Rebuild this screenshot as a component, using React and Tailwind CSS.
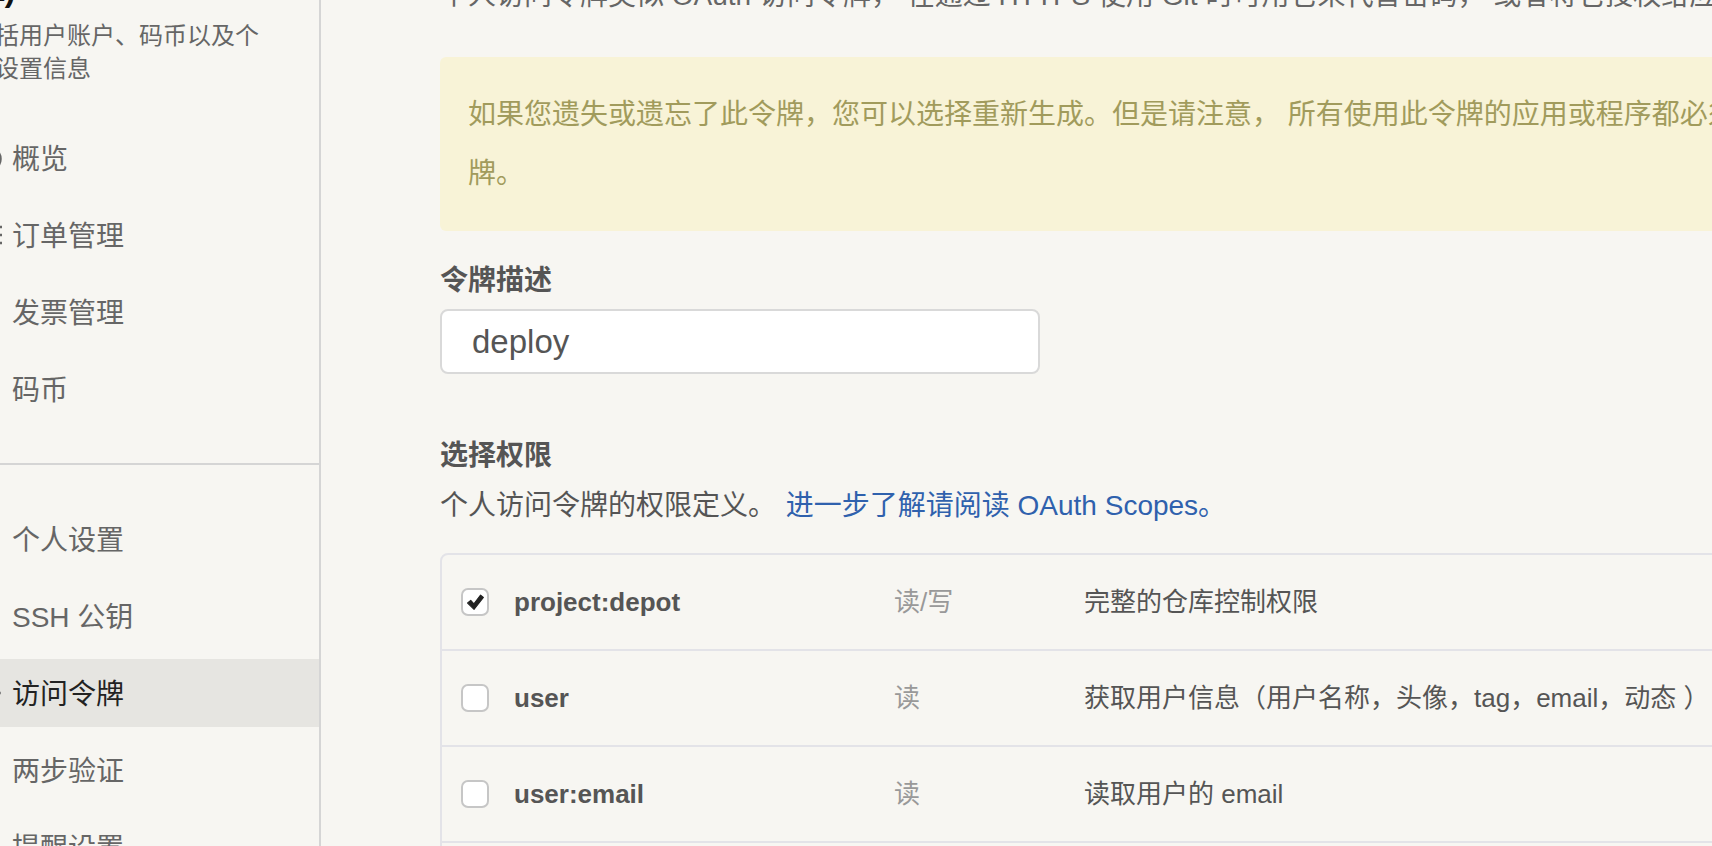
import React from 'react';

const groupOne = [
  { label: '概览', icon: 'gauge' },
  { label: '订单管理', icon: 'list' },
  { label: '发票管理' },
  { label: '码币' },
];

const groupTwo = [
  { label: '个人设置' },
  { label: 'SSH 公钥' },
  { label: '访问令牌', icon: 'key', active: true },
  { label: '两步验证' },
  { label: '提醒设置' },
];

const scopes = [
  { name: 'project:depot', access: '读/写', desc: '完整的仓库控制权限', checked: true },
  { name: 'user', access: '读', desc: '获取用户信息（用户名称，头像，tag，email，动态 ）' },
  { name: 'user:email', access: '读', desc: '读取用户的 email' },
  { name: 'project', access: '读', desc: '获取项目列表' },
];

function NavIcon({ type }) {
  if (type === 'gauge') {
    return (
      <svg width="26" height="26" viewBox="0 0 26 26" fill="none" stroke="#666" strokeWidth="2.5">
        <circle cx="13" cy="14" r="11.5" />
        <path d="M13 14l5-5" />
      </svg>
    );
  }
  if (type === 'list') {
    return (
      <svg width="26" height="26" viewBox="0 0 26 26" fill="none" stroke="#666" strokeWidth="2.5">
        <path d="M2 5h4M10 5h16M2 13h4M10 13h16M2 21h4M10 21h16" />
      </svg>
    );
  }
  if (type === 'key') {
    return (
      <svg width="26" height="26" viewBox="0 0 26 26" fill="none" stroke="#888" strokeWidth="2.5">
        <circle cx="8" cy="13" r="5" />
        <path d="M13 13h12M21 13v4" />
      </svg>
    );
  }
  return <span className="w-[26px] h-[26px]" />;
}

function NavItem({ label, icon, active }) {
  return (
    <div
      className={`h-[68px] flex items-center gap-[10px] pl-[16px] text-[28px] ${
        active ? 'bg-[#e6e5e1] text-[#222]' : 'text-[#666]'
      }`}
    >
      <NavIcon type={icon} />
      <span className="pt-[4px]">{label}</span>
    </div>
  );
}

function Checkbox({ checked }) {
  return (
    <span className="w-[28px] h-[28px] shrink-0 rounded-[7px] border-2 border-[#c6c6c6] bg-white flex items-center justify-center">
      {checked && (
        <svg width="19" height="19" viewBox="0 0 18 18">
          <path d="M1.5 9.5L4.5 7l3 3.2L13.8 2l2.7 2.2L7.6 15.5z" fill="#222" stroke="#222" strokeWidth="1" strokeLinejoin="round" />
        </svg>
      )}
    </span>
  );
}

export default function App() {
  return (
    <div className="w-[1712px] h-[846px] overflow-hidden bg-[#f7f6f2] font-['Liberation_Sans','Noto_Sans_CJK_SC',sans-serif]">
      <div className="flex min-h-[900px]">
        {/* Sidebar */}
        <aside className="w-[361px] shrink-0 -ml-[40px] -mt-[30px] border-r-2 border-[#d5d5d5]">
          <div className="pl-[11px]">
            <h2 className="text-[32px] leading-[40px] font-bold text-[#111] whitespace-nowrap">(K)</h2>
            <p className="mt-[9px] w-[300px] text-[24px] leading-[33px] text-[#666]">
              包括用户账户、码币以及个人设置信息
            </p>
          </div>

          <div className="flex flex-col gap-[9px] pt-[39px] pb-[40px]">
            {groupOne.map((item) => (
              <NavItem key={item.label} {...item} />
            ))}
          </div>
          <div className="h-[2px] bg-[#d5d5d5]" />
          <div className="flex flex-col gap-[9px] py-[40px]">
            {groupTwo.map((item) => (
              <NavItem key={item.label} {...item} />
            ))}
          </div>
        </aside>

        {/* Main */}
        <main className="ml-[119px] w-[1501px] shrink-0 -mt-[25px]">
          <p className="text-[28px] leading-[42px] text-[#666] whitespace-nowrap">
            个人访问令牌类似 OAuth 访问令牌， 在通过 HTTPS 使用 Git 时可用它来代替密码， 或者将它授权给应用程序使用。
          </p>

          <div className="mt-[40px] rounded-[6px] bg-[#f8f3d7] px-[28px] py-[28px] text-[28px] leading-[59px] text-[#a19b5c]">
            如果您遗失或遗忘了此令牌，您可以选择重新生成。但是请注意， 所有使用此令牌的应用或程序都必须更新为新的令牌。
          </div>

          <div className="mt-[30px] text-[28px] leading-[40px] font-bold text-[#555]">令牌描述</div>
          <input
            readOnly
            value="deploy"
            className="mt-[8px] block w-[600px] h-[65px] rounded-[8px] border-2 border-[#d9d9d9] bg-white pl-[30px] text-[33px] text-[#555] outline-none"
          />

          <div className="mt-[62px] text-[28px] leading-[40px] font-bold text-[#555]">选择权限</div>
          <p className="mt-[10px] text-[28px] leading-[40px] text-[#555]">
            个人访问令牌的权限定义。 <span className="ml-[2px] text-[#2f61ad]">进一步了解请阅读 OAuth Scopes。</span>
          </p>

          <div className="mt-[27px] border-2 border-[#e3e3e8] rounded-tl-[8px]">
            {scopes.map((s, i) => (
              <div
                key={s.name}
                className={`grid grid-cols-[452px_190px_1fr] items-center text-[26px] ${
                  i < scopes.length - 1 ? 'h-[96px] border-b-2 border-[#e3e3e8]' : 'h-[94px]'
                }`}
              >
                <div className="flex items-center gap-[25px] pl-[19px]">
                  <Checkbox checked={s.checked} />
                  <span className="font-bold text-[#555]">{s.name}</span>
                </div>
                <div className="text-[#999]">{s.access}</div>
                <div className="text-[#555] whitespace-nowrap">{s.desc}</div>
              </div>
            ))}
          </div>
        </main>
      </div>
    </div>
  );
}
